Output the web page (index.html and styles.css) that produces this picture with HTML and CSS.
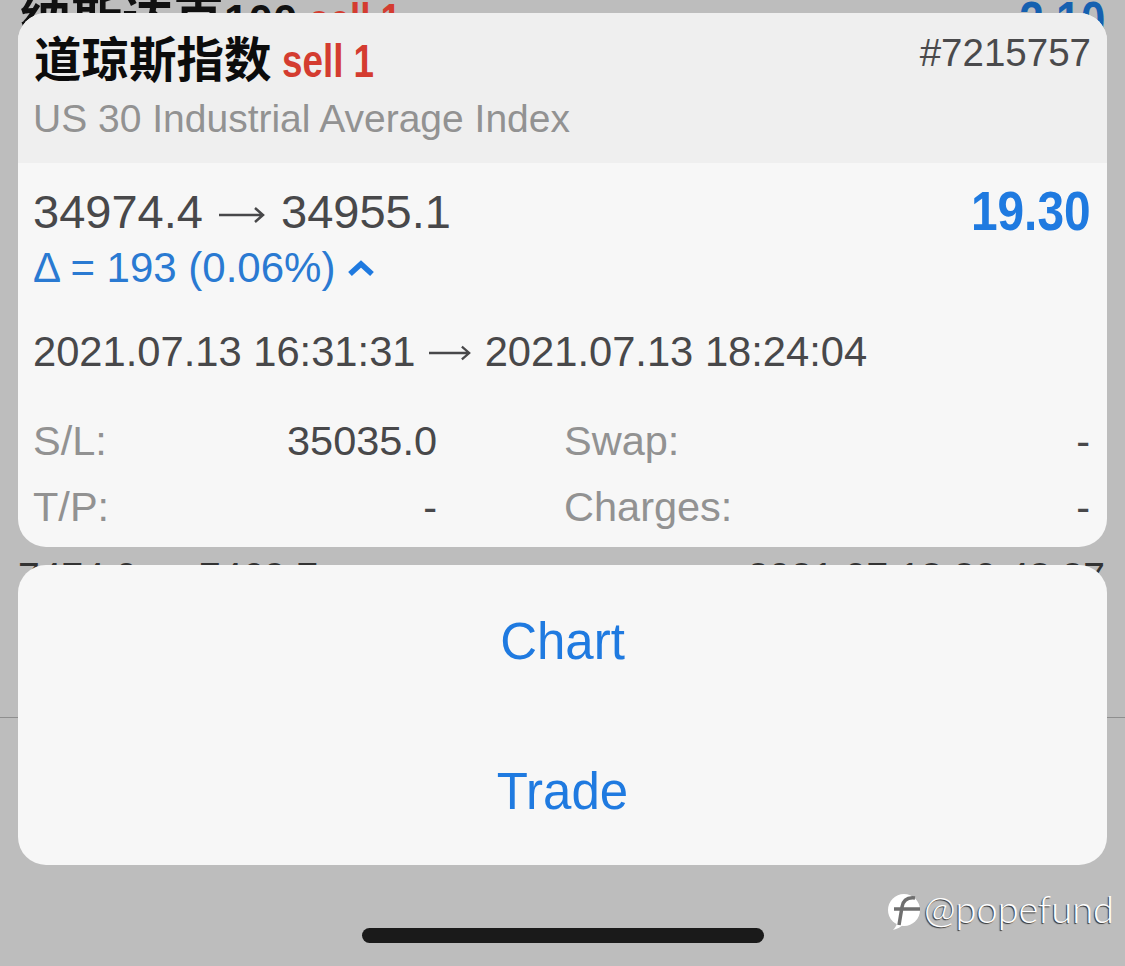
FILE: index.html

```html
<!DOCTYPE html>
<html lang="zh-CN">
<head>
  <meta charset="UTF-8" />
  <meta name="viewport" content="width=device-width, initial-scale=1.0"/>
  <title>Trade History</title>
  <link rel="stylesheet" href="styles.css">
</head>
<body>
  <div class="backdrop">
    <div class="bg-title">
      <div class="bg-name">纳斯达克<span class="bg-num">100</span> <span class="sell bg-sell">sell 1</span></div>
      <div class="bg-profit">2.10</div>
    </div>
    <div class="bg-row">
      <div>7474.0 <svg class="arrow arrow-bg" viewBox="0 0 46 20"><path d="M0 10 H44 M36 3 L44 10 L36 17" fill="none" stroke="#333" stroke-width="2.5"/></svg> 7469.7</div>
      <div>2021.07.13 20:48:27</div>
    </div>
    <div class="bg-line"></div>
  </div>

  <div class="sheet">
    <div class="card">
      <div class="card-head">
        <div class="head-row">
          <div class="title">道琼斯指数 <span class="sell">sell 1</span></div>
          <div class="ticket">#7215757</div>
        </div>
        <div class="subtitle">US 30 Industrial Average Index</div>
      </div>
      <div class="card-body">
        <div class="price-row">
          <div class="prices">34974.4 <svg class="arrow" viewBox="0 0 46 20"><path d="M0 10 H44 M36 3 L44 10 L36 17" fill="none" stroke="#48484a" stroke-width="2.5"/></svg> 34955.1</div>
          <div class="profit">19.30</div>
        </div>
        <div class="delta">
          Δ = 193 (0.06%)
          <svg class="chevron" width="28" height="18" viewBox="0 0 28 18">
            <path d="M3 15 L14 5 L25 15" fill="none" stroke="#1f7ae0" stroke-width="5.5"/>
          </svg>
        </div>
        <div class="dates">2021.07.13 16:31:31 <svg class="arrow arrow-small" viewBox="0 0 46 20"><path d="M0 10 H44 M36 3 L44 10 L36 17" fill="none" stroke="#48484a" stroke-width="2.5"/></svg> 2021.07.13 18:24:04</div>
        <div class="stats">
          <div class="stat"><span class="label">S/L:</span><span class="value">35035.0</span></div>
          <div class="stat"><span class="label">Swap:</span><span class="value">-</span></div>
          <div class="stat"><span class="label">T/P:</span><span class="value">-</span></div>
          <div class="stat"><span class="label">Charges:</span><span class="value">-</span></div>
        </div>
      </div>
    </div>

    <div class="actions">
      <div class="action">Chart</div>
      <div class="action">Trade</div>
    </div>
  </div>

  <div class="home-bar"></div>

  <div class="watermark">
    <svg width="34" height="38" viewBox="0 0 34 38">
      <circle cx="17" cy="17" r="16" fill="#fff"/>
      <path d="M11 27 L18 30 C14 34 10 36 6 37 C9 34 10 31 11 27 Z" fill="#fff"/>
      <path d="M28 5 C20 4 16 8 15 14 L12 32 M7 16 L33 16" fill="none" stroke="#6f6f6f" stroke-width="3.5"/>
    </svg>
    <span class="mark-text">@popefund</span>
  </div>
</body>
</html>
```

FILE: styles.css

```css
body {
  margin: 0;
  width: 1125px;
  height: 966px;
  overflow: hidden;
  position: relative;
  background-color: #bdbdbd;
  font-family: "Liberation Sans", Arial, sans-serif;
}

/* list that shows behind the sheet */
.backdrop {
  position: absolute;
  top: 0;
  left: 0;
  width: 1125px;
  height: 966px;
  color: #333;
}
.bg-title {
  position: absolute;
  top: -11px;
  left: 20px;
  right: 20px;
  display: flex;
  justify-content: space-between;
}
.bg-name {
  margin-top: -6px;
  font-family: "Noto Sans CJK SC", sans-serif;
  font-size: 51px;
  font-weight: 700;
  line-height: 62px;
  color: #111;
}
.bg-num {
  font-family: "Liberation Sans", sans-serif;
  font-size: 44px;
}
.bg-sell {
  color: #b5362c;
  font-size: 50px;
}
.bg-profit {
  font-size: 52px;
  font-weight: 700;
  line-height: 62px;
  color: #1560b0;
  transform: scaleX(0.85);
  transform-origin: right;
}
.bg-row {
  position: absolute;
  top: 553px;
  left: 18px;
  right: 20px;
  display: flex;
  justify-content: space-between;
  font-size: 39px;
  line-height: 48px;
}
.bg-line {
  position: absolute;
  top: 717px;
  left: 0;
  width: 100%;
  height: 1px;
  background-color: #8f8f8f;
}

.sheet {
  position: relative;
  padding: 13px 18px 0;
  display: flex;
  flex-direction: column;
  gap: 18px;
}

.card {
  height: 534px;
  border-radius: 28px;
  overflow: hidden;
  background-color: #f7f7f7;
}
.card-head {
  height: 150px;
  box-sizing: border-box;
  padding: 13px 16px 0 16px;
  background-color: #efefef;
}
.head-row {
  display: flex;
  justify-content: space-between;
}
.title {
  font-family: "Noto Sans CJK SC", sans-serif;
  font-size: 47.5px;
  font-weight: 700;
  line-height: 62px;
  color: #0c0c0c;
}
.sell {
  display: inline-block;
  font-family: "Liberation Sans", sans-serif;
  font-size: 46px;
  color: #d43c30;
  transform: scaleX(0.8);
  transform-origin: left;
}
.ticket {
  font-size: 38.5px;
  line-height: 54px;
  color: #4a4a4c;
}
.subtitle {
  margin-top: 2px;
  margin-left: -1px;
  font-size: 39px;
  line-height: 50px;
  color: #929292;
}

.card-body {
  padding: 21px 16px 0 15px;
}
.price-row {
  display: flex;
  justify-content: space-between;
  align-items: center;
  height: 54px;
}
.prices {
  font-size: 47px;
  color: #48484a;
}
.arrow {
  width: 46px;
  height: 20px;
  margin: 0 3px;
  vertical-align: 3px;
}
.arrow-small {
  width: 42px;
  margin: 0 2px;
}
.arrow-bg {
  width: 40px;
  margin: 0;
}
.profit {
  font-size: 55px;
  font-weight: 700;
  color: #1f7ae0;
  transform: scaleX(0.87);
  transform-origin: right;
}
.delta {
  display: flex;
  align-items: center;
  gap: 12px;
  height: 50px;
  margin-top: 5px;
  font-size: 42px;
  color: #2a7ad2;
}
.dates {
  margin-top: 34px;
  font-size: 41.7px;
  line-height: 50px;
  color: #48484a;
}
.stats {
  margin-top: 39px;
  display: grid;
  grid-template-columns: 404px 526px;
  column-gap: 127px;
  row-gap: 16px;
  width: 1057px;
}
.stat {
  display: flex;
  justify-content: space-between;
  font-size: 41.5px;
  line-height: 50px;
}
.label {
  color: #929292;
}
.value {
  color: #48484a;
}

.actions {
  height: 300px;
  border-radius: 28px;
  background-color: #f7f7f7;
  display: flex;
  flex-direction: column;
}
.action {
  flex: 1;
  display: flex;
  align-items: center;
  justify-content: center;
  padding-top: 2px;
  font-size: 51px;
  color: #1f7ae0;
}

.home-bar {
  position: absolute;
  top: 928px;
  left: 362px;
  width: 402px;
  height: 15px;
  border-radius: 8px;
  background-color: #1a1a1a;
}

.watermark {
  position: absolute;
  top: 893px;
  left: 887px;
  display: flex;
  align-items: flex-start;
  gap: 3px;
  font-family: Lato, sans-serif;
  font-size: 38px;
  font-weight: 300;
  line-height: 40px;
  color: #fff;
  text-shadow: -1px 1px 1px #333;
}
.mark-text {
  margin-top: -5px;
}
```
